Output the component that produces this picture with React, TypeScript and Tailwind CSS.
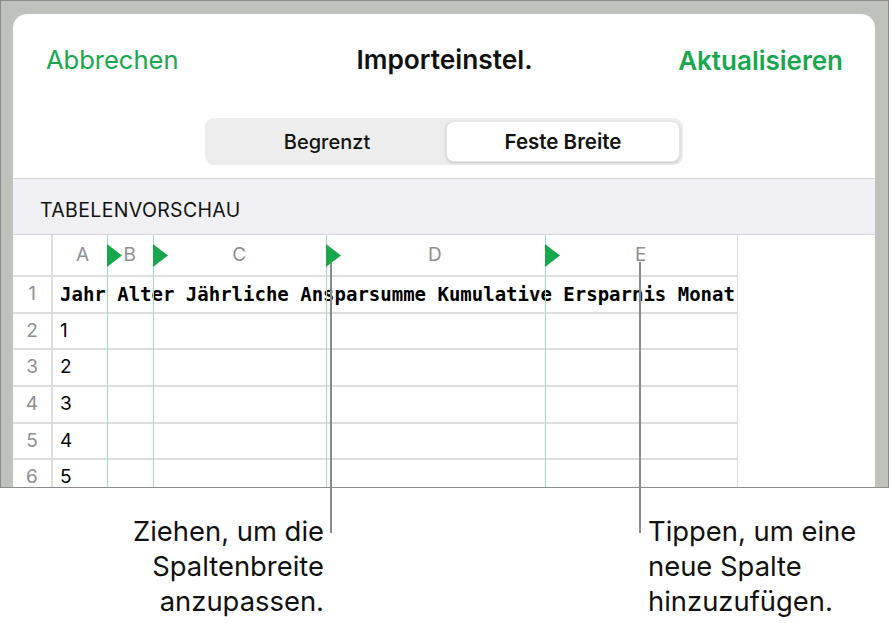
import React from "react";

const sans = { fontFamily: "Inter, 'Liberation Sans', sans-serif" };
const mono = { fontFamily: "'DejaVu Sans Mono', 'Liberation Mono', monospace" };

const cols = [
  { l: "A", w: 53.5, pad: "pl-[6px]" },
  { l: "B", w: 46.5, pad: "" },
  { l: "C", w: 173, pad: "" },
  { l: "D", w: 219, pad: "" },
  { l: "E", w: 193, pad: "" },
];

function Triangle() {
  return (
    <svg width="16" height="24" viewBox="0 0 16 24" className="absolute left-0 top-[9px]">
      <polygon points="0,0 15,11.5 0,23" fill="#17a84e" />
    </svg>
  );
}

export default function App() {
  const rows = ["1", "2", "3", "4", "5"];
  return (
    <div className="relative w-[891px] h-[628px] bg-white overflow-hidden" style={sans}>
      {/* screenshot frame */}
      <div className="w-[889px] h-[488px] border border-[#8c8c8c] bg-[#bfc1bd] pt-[13px] pl-[12px] pr-[13px]">
        <div className="h-full bg-white rounded-t-[14px] flex flex-col overflow-hidden">
          {/* nav header */}
          <div className="h-[92px] grid grid-cols-[1fr_auto_1fr] items-center pl-[33px] pr-[32px] shrink-0">
            <span className="text-[25.5px] text-[#17a84e]">Abbrechen</span>
            <span className="text-[26.3px] font-semibold text-[#111]">Importeinstel.</span>
            <span className="text-[26px] font-semibold text-[#17a84e] text-right">Aktualisieren</span>
          </div>
          {/* segmented control */}
          <div className="flex justify-center pt-[12px] pb-[13px] shrink-0">
            <div className="w-[478px] h-[47px] rounded-[9px] bg-[#ededee] p-[3px] flex">
              <div className="flex-1 flex items-center justify-center text-[20px] font-medium text-[#111]">
                Begrenzt
              </div>
              <div className="w-[234px] flex items-center justify-center pt-[1px] rounded-[8px] bg-white shadow-[0_1px_3px_rgba(0,0,0,0.18)] border border-[#e4e4e4] text-[20.5px] font-semibold text-[#111]">
                Feste Breite
              </div>
            </div>
          </div>
          {/* section header */}
          <div className="h-[57px] border-t border-b border-[#d6d6da] bg-[#f1f1f5] flex items-center pl-[27px] pt-[9px] shrink-0">
            <span className="text-[19.5px] text-[#111] tracking-[0.35px]">TABELENVORSCHAU</span>
          </div>
          {/* table */}
          <div className="relative flex-1 overflow-hidden">
            <div className="w-[725px] h-full border-r border-[#dadada] flex flex-col">
              {/* column letters */}
              <div className="h-[42px] flex border-b-2 border-[#dedede] shrink-0">
                <div className="w-[40px] border-r-2 border-[#dedede]" />
                {cols.map((c) => (
                  <div
                    key={c.l}
                    className={`flex items-center justify-center text-[19px] text-[#8e8e93] ${c.pad}`}
                    style={{ width: c.w }}
                  >
                    {c.l}
                  </div>
                ))}
              </div>
              {/* row 1 */}
              <div className="h-[36.5px] flex border-b-2 border-[#dedede] shrink-0">
                <div className="w-[40px] border-r-2 border-[#dedede] flex items-center justify-center text-[19px] text-[#8e8e93]">
                  1
                </div>
                <div className="flex-1 overflow-hidden flex items-center pl-[7px]">
                  <span className="whitespace-nowrap text-[19px] font-bold text-black" style={mono}>
                    Jahr Alter Jährliche Ansparsumme Kumulative Ersparnis Monat
                  </span>
                </div>
              </div>
              {rows.map((r, i) => (
                <div key={r} className="h-[36.7px] flex border-b-2 border-[#dedede] shrink-0">
                  <div className="w-[40px] border-r-2 border-[#dedede] flex items-center justify-center text-[19px] text-[#8e8e93]">
                    {i + 2}
                  </div>
                  <div className="flex-1 flex items-center pl-[7px] text-[19px] text-black">{r}</div>
                </div>
              ))}
            </div>
            {/* green column break markers */}
            {[93.5, 140, 313, 532].map((x) => (
              <div key={x} className="absolute top-0 bottom-0 w-px bg-[#9fdcbc]" style={{ left: x }}>
                <Triangle />
              </div>
            ))}
          </div>
        </div>
      </div>

      {/* callout lines */}
      <div className="absolute left-[330px] top-[263px] w-[2px] h-[270px] bg-[#8a8a8a]" />
      <div className="absolute left-[639px] top-[262px] w-[2px] h-[271px] bg-[#8a8a8a]" />

      {/* callout texts */}
      <div className="flex pt-[26px]">
        <div className="w-[324px] text-right text-[27.4px] leading-[35px] text-[#111]">
          Ziehen, um die
          <br />
          Spaltenbreite
          <br />
          anzupassen.
        </div>
        <div className="ml-[324px] text-left text-[27.4px] leading-[35px] text-[#111]">
          Tippen, um eine
          <br />
          neue Spalte
          <br />
          hinzuzufügen.
        </div>
      </div>
    </div>
  );
}
